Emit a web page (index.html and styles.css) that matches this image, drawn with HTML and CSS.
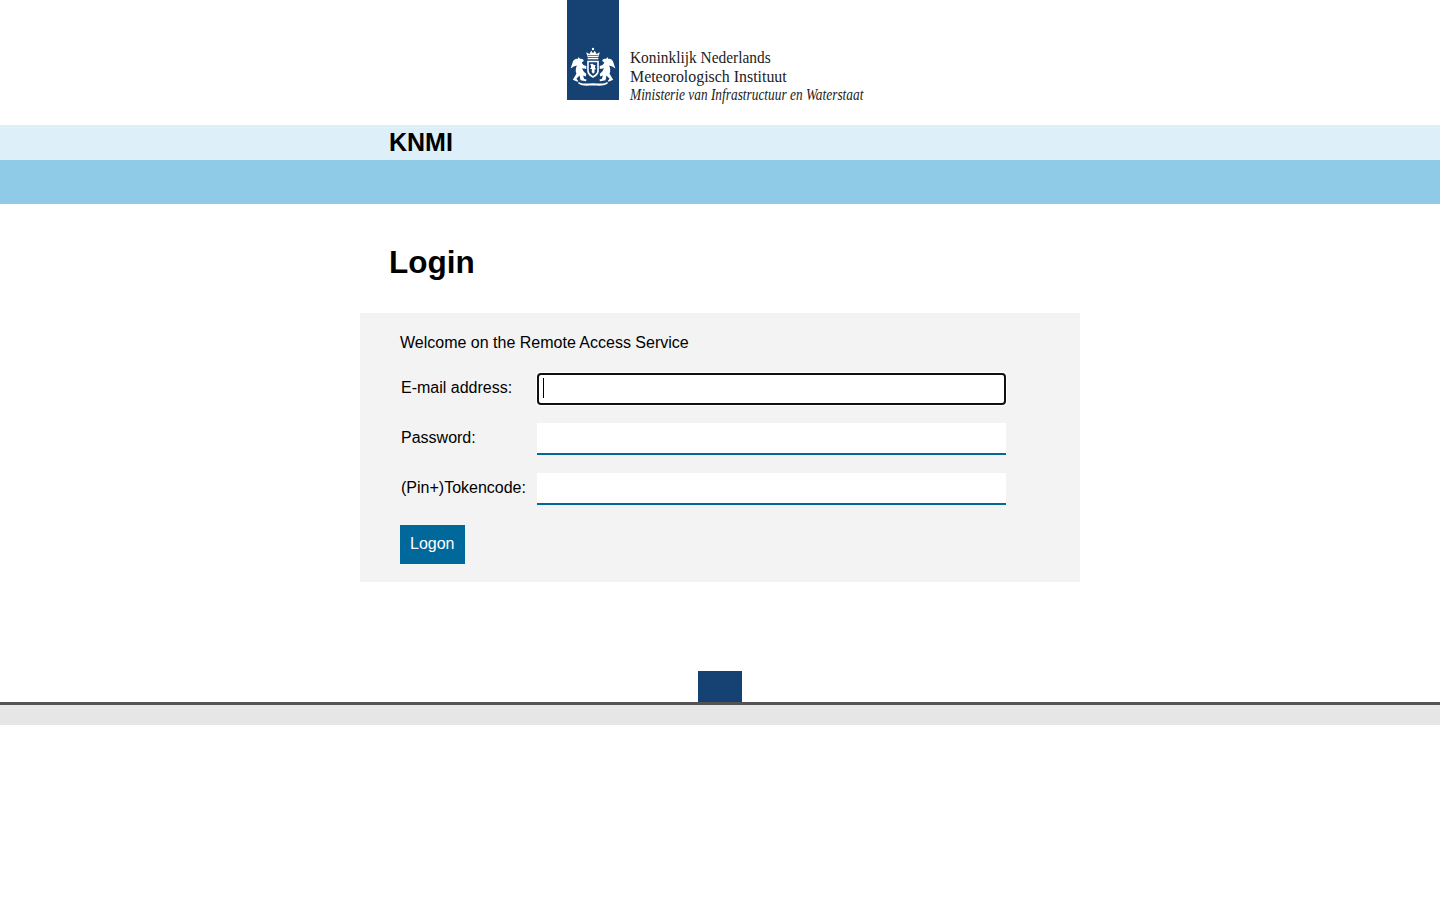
FILE: index.html
```html
<!DOCTYPE html>
<html lang="en">
<head>
<meta charset="utf-8">
<title>KNMI Login</title>
<link rel="stylesheet" href="styles.css">
</head>
<body>
<header class="masthead">
  <div class="logo">
    <div class="logo-mark">
      <svg class="crest" viewBox="-3 0 58 41" width="52" height="39" preserveAspectRatio="none" aria-hidden="true">
        <g fill="#fff">
          <path d="M20 10.5 L18.4 5.5 L22 7.3 L24 4 L26 6.5 L28 4 L30 7.3 L33.6 5.5 L32 10.5 Z"/>
          <circle cx="26" cy="2.2" r="1.3"/>
          <rect x="20" y="11.3" width="12" height="1.6"/>
          <path d="M19.5 14.5 H32.5 V25 C32.5 29 29 31 26 32.5 C23 31 19.5 29 19.5 25 Z"/>
          <path d="M3 17 C4 13 7 12 9 12.5 L10 10.5 L11.5 12.5 C14 12 16 13 15.5 15 L13.5 16 C13.5 18 16 19.5 18.5 20 L18.5 23 C16.5 23 15 22.5 14 22 C14.5 25 16.5 27 18.5 28 L18 31 L15 30 L16 33.5 L19 34.5 L18 36 L12 35 L11 30 L7.5 33.5 L9.5 35.5 L8.5 36.5 L3.5 34.5 L7.5 28 C6 25 7 21.5 8 19.5 L4.5 20.5 L1 22.5 Z"/>
          <path d="M49 17 C48 13 45 12 43 12.5 L42 10.5 L40.5 12.5 C38 12 36 13 36.5 15 L38.5 16 C38.5 18 36 19.5 33.5 20 L33.5 23 C35.5 23 37 22.5 38 22 C37.5 25 35.5 27 33.5 28 L34 31 L37 30 L36 33.5 L33 34.5 L34 36 L40 35 L41 30 L44.5 33.5 L42.5 35.5 L43.5 36.5 L48.5 34.5 L44.5 28 C46 25 45 21.5 44 19.5 L47.5 20.5 L51 22.5 Z"/>
          <path d="M10 36.5 C14 39.5 20 38 26 38 C32 38 38 39.5 42 36.5 L42.5 38.5 C38 41.5 32 40.5 26 40.5 C20 40.5 14 41.5 9.5 38.5 Z"/>
        </g>
        <g fill="#154273">
          <path d="M21.3 16 H30.7 V24.8 C30.7 27.8 28.2 29.3 26 30.5 C23.8 29.3 21.3 27.8 21.3 24.8 Z"/>
          <rect x="20" y="8.7" width="12" height="0.7"/>
        </g>
        <path fill="#fff" d="M23 18 L25.5 17.5 L27 19 L29 19 L28 21 L29.3 23.5 L27.5 24 L28 26.5 L26 28 L24.5 26 L25 23.5 L22.8 23 L24 21 Z"/>
      </svg>
    </div>
    <div class="logo-text">
      <div class="logo-line logo-one">Koninklijk Nederlands</div>
      <div class="logo-line logo-two">Meteorologisch Instituut</div>
      <div class="logo-line logo-three">Ministerie van Infrastructuur en Waterstaat</div>
    </div>
  </div>
</header>

<div class="band-light"><div class="site-name">KNMI</div></div>
<div class="band-blue"></div>

<main>
  <h1 class="title">Login</h1>
  <form class="panel" onsubmit="return false">
    <p class="welcome">Welcome on the Remote Access Service</p>
    <div class="fields">
      <label class="field-label" for="email">E-mail address:</label>
      <div class="field-wrap">
        <input class="field-input" id="email" type="text" autofocus>
        <span class="caret"></span>
      </div>
      <label class="field-label" for="password">Password:</label>
      <div class="field-wrap">
        <input class="field-input" id="password" type="password">
      </div>
      <label class="field-label" for="token">(Pin+)Tokencode:</label>
      <div class="field-wrap">
        <input class="field-input" id="token" type="password">
      </div>
    </div>
    <button class="logon" type="submit">Logon</button>
  </form>
</main>

<footer class="footer">
  <div class="footer-tab"></div>
  <div class="footer-bar"></div>
</footer>
</body>
</html>
```

FILE: styles.css
```css
* {
  box-sizing: border-box;
}

html,
body {
  margin: 0;
  background: #fff;
}

body {
  font-family: "Liberation Sans", Arial, sans-serif;
  font-size: 16px;
  color: #000;
}

.masthead {
  height: 125px;
  display: flex;
  justify-content: center;
}

.logo {
  width: 306px;
  height: 105px;
  display: flex;
  align-items: flex-start;
}

.logo-mark {
  width: 52px;
  height: 100px;
  background: #154273;
  padding-top: 47px;
  flex: none;
}

.crest {
  display: block;
}

.logo-text {
  margin-left: 11px;
  padding-top: 49px;
  font-family: "Liberation Serif", "Times New Roman", serif;
  color: #222;
  white-space: nowrap;
}

.logo-line {
  height: 18.5px;
  line-height: 18.5px;
  transform-origin: left center;
}

.logo-one {
  font-size: 17px;
  transform: scaleX(0.906);
}

.logo-two {
  font-size: 17px;
  transform: scaleX(0.935);
}

.logo-three {
  font-size: 16.5px;
  font-style: italic;
  transform: scaleX(0.81);
}

.band-light {
  height: 35px;
  background: #ddeff8;
  padding-left: 389px;
}

.site-name {
  font-size: 25px;
  font-weight: 700;
  line-height: 35px;
}

.band-blue {
  height: 44px;
  background: #8fcae7;
}

.title {
  margin: 0;
  padding: 40px 0 32px 389px;
  font-size: 31.5px;
  font-weight: 700;
  line-height: 37px;
}

.panel {
  width: 720px;
  height: 269px;
  margin: 0 auto;
  padding: 21px 40px 18px;
  background: #f3f3f3;
}

.welcome {
  margin: 0 0 21px;
  line-height: 18px;
}

.fields {
  display: grid;
  grid-template-columns: 137px 469px;
  row-gap: 18px;
  align-items: start;
}

.field-label {
  padding: 6px 0 0 1px;
  line-height: 18px;
}

.field-wrap {
  position: relative;
  height: 32px;
}

.field-input {
  display: block;
  width: 469px;
  height: 32px;
  padding: 1px 6px;
  border: 0;
  border-bottom: 2px solid #01689b;
  background: #fff;
  font: inherit;
  caret-color: transparent;
}

.field-input:focus {
  border-bottom-color: transparent;
  outline-offset: -1px;
}

.caret {
  position: absolute;
  left: 6px;
  top: 5px;
  width: 1px;
  height: 20px;
  background: #000;
}

.logon {
  display: block;
  width: 65px;
  height: 39px;
  margin-top: 20px;
  padding: 0 0 2px 10px;
  border: 0;
  background: #01689b;
  color: #fff;
  font: inherit;
  text-align: left;
}

.footer {
  margin-top: 89px;
}

.footer-tab {
  width: 44px;
  height: 31px;
  margin: 0 auto;
  background: #154273;
}

.footer-bar {
  height: 23px;
  background: #e6e6e6;
  border-top: 3px solid #535353;
}
```
